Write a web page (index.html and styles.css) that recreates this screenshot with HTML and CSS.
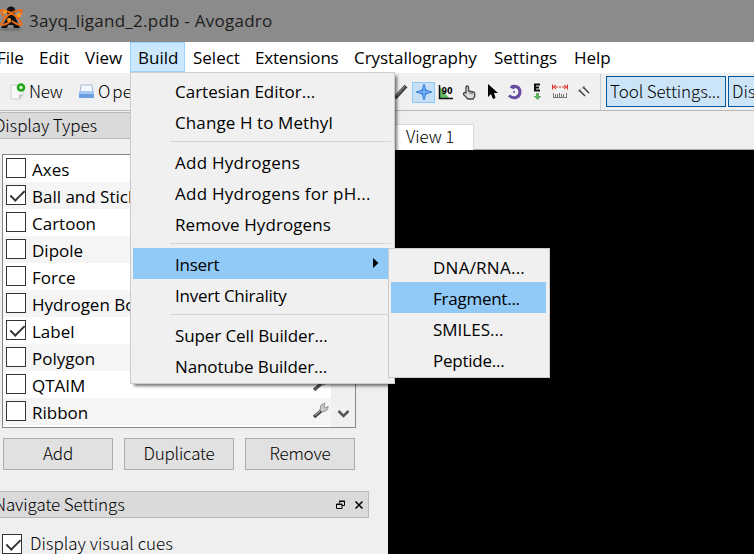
FILE: index.html
```html
<!DOCTYPE html>
<html lang="en">
<head>
<meta charset="utf-8">
<title>3ayq_ligand_2.pdb - Avogadro</title>
<link rel="stylesheet" href="styles.css">
</head>
<body>
<div class="window">
  <header class="titlebar">
    <svg class="logo" width="26" height="26" viewBox="0 0 26 26">
      <ellipse cx="12" cy="23.500" rx="11" ry="1.800" fill="#777"/>
      <path d="M10 8h5l6 14h-6l-1-3H9l-1 3H2z" fill="#111"/>
      <circle cx="12" cy="5" r="4.500" fill="#111"/>
      <path d="M2 4C9 4 21 11 23 19M23 4C15 4 4 11 2 19M2 4q0 5 6 8M23 4q0 5-6 8M2 19q5 0 10-4M23 19q-5 0-10-4" stroke="#ef6c13" stroke-width="1.800" fill="none"/>
      <circle cx="6" cy="6" r="2" fill="#ff9b20"/><circle cx="20" cy="9" r="2.300" fill="#ff9b20"/><circle cx="10" cy="14" r="2" fill="#ff9b20"/>
    </svg>
    <span class="title">3ayq_ligand_2.pdb - Avogadro</span>
  </header>
  <nav class="menubar">
    <span class="m-file">File</span><span class="m-edit">Edit</span><span class="m-view">View</span><span class="m-build">Build</span><span class="m-select">Select</span><span class="m-ext">Extensions</span><span class="m-cry">Crystallography</span><span class="m-set">Settings</span><span class="m-help">Help</span>
  </nav>
  <div class="toolbar">
    <div class="files">
      <svg width="16" height="18" viewBox="0 0 16 18"><path d="M1 2h12v10l-3 4H1z" fill="#f8f8f8" stroke="#d2d2d2"/><path d="M9 16l4-5-4 1z" fill="#bbb"/><circle cx="11" cy="4.500" r="4.300" fill="#20a51c"/><circle cx="11" cy="4.500" r="1.700" fill="#d8ffd0"/></svg>
      <span class="ui t-new">New</span>
      <svg class="i-open" width="17" height="16" viewBox="0 0 17 16"><path d="M3 1h11l1 8H2z" fill="#f5f8fc" stroke="#9fb9dc"/><path d="M1 7h15v7H1z" fill="#6c9fe0"/><path d="M1 7h15v3H1z" fill="#a5c9f3"/></svg>
      <span class="ui t-open"><b>O</b>pen</span>
    </div>
    <div class="tools">
      <svg width="16" height="18" viewBox="0 0 16 18"><path d="M2 15L13 3" stroke="#444" stroke-width="4"/><path d="M3 13L12 3" stroke="#999"/></svg>
      <span class="active-tool"><svg width="18" height="18" viewBox="0 0 18 18"><path d="M9 1l2 6 6 2-6 2-2 6-2-6-6-2 6-2z" fill="#3c8ae8" stroke="#2165c1" stroke-width=".6"/><path d="M9 4v10M4 9h10" stroke="#8ec3ff"/></svg></span>
      <svg class="i-angle" width="16" height="18" viewBox="0 0 16 18"><path d="M2 4l9 11H2z" fill="#62bd66"/><path d="M1.500 2v13.500H15" stroke="#111" stroke-width="1.500" fill="none"/><text x="3.500" y="11" class="deg">90</text></svg>
      <svg class="i-hand" width="16" height="18" viewBox="0 0 16 18"><path d="M5 10V4q1.200-2 2.500 0v4l5.500 1q2 4-1 7H7l-4.500-4.500q0-3 2.500-1.500z" fill="#ddd" stroke="#444" stroke-width="1.300"/><path d="M9 7.500v3.500M11 8.500v3" stroke="#555"/></svg>
      <svg class="i-arrow" width="12" height="18" viewBox="0 0 12 18"><path d="M2 1v13l3-3 2 5 2.500-1L8 10h4z" fill="#000"/></svg>
      <svg class="i-rotate" width="16" height="18" viewBox="0 0 16 18"><path d="M4 4C8 2 13 4 13 9s-6 8-11 3.500" stroke="#684aa3" stroke-width="3" fill="none"/><path d="M2.500 4.500l5-3v5z" fill="#684aa3"/><circle cx="7" cy="9" r="1" fill="#684aa3"/></svg>
      <svg class="i-energy" width="10" height="18" viewBox="0 0 10 18"><path d="M8 1.500H3v6h5M3 4.500h4" stroke="#111" stroke-width="2" fill="none"/><path d="M4 10h3v3h2.500l-4 4-4-4H4z" fill="#5fae62"/></svg>
      <svg class="i-measure" width="16" height="18" viewBox="0 0 16 18"><path d="M.5 1.500v5M15.500 1.500v5M1 4h5M10 4h5M4 2L1.500 4 4 6M12 2l2.500 2L12 6M7 4h2" stroke="#e03131" fill="none"/><path d="M1 14.500h14M1.500 10v4M3.500 11v3M5.500 11v3M7.500 10v4M9.500 11v3M11.500 11v3M14.500 10v4" stroke="#777"/></svg>
      <svg class="i-align" width="12" height="18" viewBox="0 0 12 18"><path d="M1 7l6 6M5 4l6 6" stroke="#333" stroke-width="1.300"/><path d="M1 9V7h2M5 6V4h2" stroke="#777" fill="none"/></svg>
    </div>
    <div class="panels"><span class="toggle ui wide"><b class="t-tool">Tool Settings...</b></span><span class="toggle ui"><b class="t-disp">Display Settings...</b></span></div>
  </div>
  <main class="body">
    <aside class="dock">
      <h2 class="dock-title ui first"><span class="t-dt">Display Types</span></h2>
      <div class="list">
        <ul class="rows">
          <li><i class="box"></i><span>Axes</span></li>
          <li><i class="box on"></i><span>Ball and Sticks</span></li>
          <li><i class="box"></i><span>Cartoon</span></li>
          <li><i class="box"></i><span>Dipole</span></li>
          <li><i class="box"></i><span>Force</span></li>
          <li><i class="box"></i><span>Hydrogen Bond</span></li>
          <li><i class="box on"></i><span>Label</span></li>
          <li><i class="box"></i><span>Polygon</span></li>
          <li><i class="box"></i><span>QTAIM</span><svg class="wrench" width="17" height="18" viewBox="0 0 17 18"><path d="M2 15l8-7" stroke="#555" stroke-width="3.500"/><path d="M9 8l1-5 3-1-1 3 2 1 2-2q1 5-6 6z" fill="#c9c9c9" stroke="#777" stroke-width=".7"/></svg></li>
          <li><i class="box"></i><span>Ribbon</span><svg class="wrench" width="17" height="18" viewBox="0 0 17 18"><path d="M2 15l7-6" stroke="#444" stroke-width="3.500"/><path d="M3 13.500l6-5.500" stroke="#ccc"/><path d="M8 8l1-5 4-2-1 4 2 1 2-2q1 5-6 6z" fill="#c9c9c9" stroke="#777" stroke-width=".7"/></svg></li>
        </ul>
        <div class="scroll"><svg width="13" height="10" viewBox="0 0 13 10"><path d="M1.500 2l5 5 5-5" fill="none" stroke="#555" stroke-width="2.500"/></svg></div>
      </div>
      <div class="buttons ui"><span class="btn t-add">Add</span><span class="btn t-dup">Duplicate</span><span class="btn t-rem">Remove</span></div>
      <h2 class="dock-title ui second"><span class="t-nav">Navigate Settings</span>
        <svg width="28" height="10" viewBox="0 0 28 10"><path d="M3.500 3V1.500H8.500v4H6M.5 4h5.500v4.500H.5zM3 1h6M0 4.500h6" fill="none" stroke="#000"/><path d="M19.500 1.500l7 7M26.500 1.500l-7 7" stroke="#000" stroke-width="1.500"/></svg>
      </h2>
      <label class="cues ui"><i class="box on"></i><span class="t-cues">Display visual cues</span></label>
    </aside>
    <section class="view">
      <div class="tabs"><span class="tab ui"><b class="t-view">View 1</b></span></div>
      <div class="canvas"></div>
    </section>
  </main>

  <div class="menu build-menu">
    <div class="item">Cartesian Editor...</div>
    <div class="item loose">Change H to Methyl</div>
    <hr>
    <div class="item wider">Add Hydrogens</div>
    <div class="item wider">Add Hydrogens for pH...</div>
    <div class="item loose">Remove Hydrogens</div>
    <hr>
    <div class="item hot narrow">Insert<svg width="6" height="10" viewBox="0 0 6 10"><path d="M0 0l5.500 5L0 10z"/></svg></div>
    <div class="item narrow">Invert Chirality</div>
    <hr>
    <div class="item tight">Super Cell Builder...</div>
    <div class="item tight">Nanotube Builder...</div>
  </div>
  <div class="menu insert-menu">
    <div class="item wider">DNA/RNA...</div>
    <div class="item hot narrow">Fragment...</div>
    <div class="item">SMILES...</div>
    <div class="item narrow">Peptide...</div>
  </div>
</div>
</body>
</html>
```
FILE: styles.css
```css
* { box-sizing: border-box; }
body { margin: 0; overflow: hidden; }
svg { display: block; flex: none; }
b { font-weight: inherit; }
.window {
  position: relative; display: flex; flex-direction: column;
  width: 754px; height: 554px; overflow: hidden; background: #efefef; color: #000;
  font: 400 17px/27px "Open Sans", "Noto Sans", sans-serif; white-space: nowrap;
}
.ui { font-family: "Noto Sans CJK JP", "Open Sans", sans-serif; font-weight: 300; font-size: 17px; }
.titlebar { display: flex; height: 42px; flex: none; background: #8b8b8b; color: #1c1c1c; padding-top: 6px; }
.logo { margin-left: -1px; }
.title { margin-left: 4px; line-height: 30px; letter-spacing: .25px; }
.menubar { display: flex; flex: none; height: 32px; background: #fff; border-bottom: 1px solid #eee; line-height: 31px; }
.menubar span { flex: none; height: 30px; }
.m-file { width: 39px; margin-left: -3px; }
.m-edit { width: 49px; padding-left: 3px; }
.m-view { width: 45px; }
.menubar .m-build { width: 55px; padding-left: 7px; background: #cce8ff; border: 1px solid #99d1ff; line-height: 29px; }
.m-select { width: 70px; padding-left: 8px; }
.m-ext { width: 99px; letter-spacing: -.2px; }
.m-cry { width: 140px; letter-spacing: -.05px; }
.m-set { width: 80px; }
.toolbar { display: flex; flex: none; height: 37px; border-bottom: 1px solid #b9b9b9; background: #f0f0f0; }
.files { display: flex; align-items: center; width: 393px; padding-left: 10px; overflow: hidden; flex: none; }
.t-new { width: 52px; padding: 0 0 3px 3px; letter-spacing: -.3px; }
.t-open { padding: 0 0 3px 3px; }
.t-open b { margin-right: 2px; }
.tools { display: flex; align-items: center; width: 207px; flex: none; }
.active-tool { display: flex; align-items: center; justify-content: center; width: 23px; height: 21px; background: #c4e0f7; border: 1px solid #91c9f7; margin-left: 3px; }
.i-angle { margin-left: 3px; }
.i-hand { margin-left: 7px; }
.i-arrow { margin-left: 9px; }
.i-rotate { margin-left: 9px; }
.i-energy { margin-left: 9px; }
.i-measure { margin-left: 10px; }
.i-align { margin-left: 10px; }
.deg { font: bold 8px "DejaVu Sans", sans-serif; }
.panels { display: flex; gap: 2px; padding: 2px 0 3px 5px; border-left: 1px solid #ccc; }
.toggle { flex: none; border: 1px solid #00579b; background: #cce4f7; padding-left: 3px; line-height: 28px; }
.t-tool { letter-spacing: -.1px; }
.wide { width: 120px; }
.body { display: flex; flex: 1; min-height: 0; }
.dock { width: 388px; flex: none; }
.dock-title { display: flex; align-items: center; width: 370px; height: 27px; margin: 1px 0 0; background: #dadada; border: 1px solid #b9b9b9; border-left: 0; }
.dock-title span { margin-left: -6px; padding-bottom: 2px; letter-spacing: -.1px; }
.second span { letter-spacing: -.1px; }
.dock-title svg { margin-left: auto; margin-right: 4px; }
.list { display: flex; width: 354px; height: 274px; margin: 15px 0 0 2px; border: 1px solid #828790; background: #fff; }
.rows { width: 328px; margin: 0; padding: 0; list-style: none; }
.rows li { display: flex; height: 27px; padding-left: 3px; }
.rows li:nth-child(even) { background: #f5f5f5; }
.box { width: 20px; height: 20px; margin-top: 3px; border: 1px solid #333; background: #fff; flex: none; }
.box.on::after { content: ""; display: block; width: 13px; height: 6px; margin: 4px 0 0 3px; border: solid #333; border-width: 0 0 2px 2px; transform: rotate(-45deg) scaleX(.95); }
.rows span { margin-left: 6px; line-height: 29px; }
.wrench { margin: 4px 2px 0 auto; }
.scroll { display: flex; align-items: flex-end; justify-content: center; flex: 1; padding-bottom: 8px; background: #f0f0f0; }
.buttons { display: flex; gap: 11px; margin: 10px 0 0 3px; }
.btn { width: 110px; height: 32px; border: 1px solid #adadad; background: #e1e1e1; text-align: center; line-height: 28px; letter-spacing: -.2px; }
.dock .second { width: 369px; margin-top: 21px; }
.cues { display: flex; margin: 13px 0 0 2px; }
.cues span { margin-left: 8px; line-height: 24px; }
.view { flex: 1; display: flex; flex-direction: column; min-width: 0; }
.tabs { display: flex; flex: none; height: 39px; padding-top: 13px; border-bottom: 1px solid #aaa; }
.tab { width: 86px; height: 26px; padding-left: 17px; background: #fff; border: 1px solid #d9d9d9; border-bottom: 0; line-height: 22px; letter-spacing: -.1px; }
.canvas { flex: 1; background: #000; }
.menu { position: absolute; background: #f0f0f0; border: 1px solid #ccc; padding: 2px; }
.build-menu { left: 130px; top: 72px; width: 265px; height: 312px; box-shadow: 3px 3px 3px -1px rgba(0,0,0,.55); }
.insert-menu { left: 388px; top: 248px; width: 162px; height: 130px; }
.item { display: flex; align-items: center; height: 31px; padding: 2px 0 0 42px; line-height: 30px; }
.tight { letter-spacing: -.1px; }
.narrow { letter-spacing: -.25px; }
.loose { letter-spacing: .1px; }
.wider { letter-spacing: .25px; }
.insert-menu .item { margin-right: 1px; }
.hot { background: #91c9f7; }
.item svg { margin: -4px 13px 0 auto; }
.menu hr { height: 1px; margin: 4px 1px 4px 37px; border: 0; background: #d5d5d5; }
```
